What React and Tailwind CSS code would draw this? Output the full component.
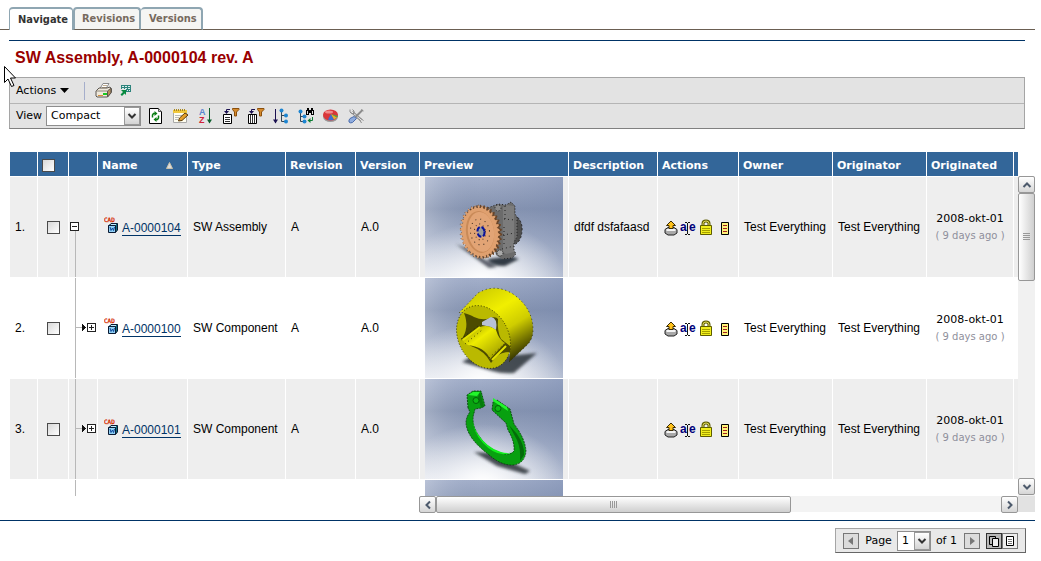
import React from "react";

const VERDANA = "font-['DejaVu_Sans',sans-serif]";

const rows = [
  { id: 1, name: "A-0000104", type: "SW Assembly", rev: "A", ver: "A.0", desc: "dfdf dsfafaasd", root: true, art: "gear" },
  { id: 2, name: "A-0000100", type: "SW Component", rev: "A", ver: "A.0", desc: "", art: "bushing" },
  { id: 3, name: "A-0000101", type: "SW Component", rev: "A", ver: "A.0", desc: "", art: "ring" },
];

/* ---------- small icons ---------- */

function Icon({ children, w = 16, h = 16, className = "" }) {
  return (
    <svg width={w} height={h} viewBox={`0 0 ${w} ${h}`} className={`block shrink-0 ${className}`} aria-hidden="true">
      {children}
    </svg>
  );
}

const Printer = () => (
  <Icon w={17} h={15}>
    <path d="M5 5.500 8 .5h6l-3 5z" fill="#fff" stroke="#8a8a8a" />
    <path d="M8 2.500h4M7 4.500h4" stroke="#c2ad90" />
    <path d="M1 8 4 5h8l3-1 1.500 2v3l-4 5H2l-1-1z" fill="#efe9dc" stroke="#5c5750" />
    <path d="m12.500 8 3.500-3v5l-3.500 4z" fill="#b48d5e" stroke="#5c5750" />
    <path d="M1 8h11.500" stroke="#8d867a" />
    <path d="M3 12.500h5" stroke="#d8903a" />
    <path d="M8 10h4v2H8z" fill="#18c81e" />
  </Icon>
);

const Export = () => (
  <Icon w={11} h={11}>
    <path d="M1 0h10v7H6V4H1z" fill="#2d837c" />
    <path d="M2 1h2v1H2zM5 1h2v1H5zM8 1h2v1H8zM2 3h2v1H2zM5 3h2v1H5zM8 3h2v1H8zM7 5h1v1H7zM9 5h1v1H9z" fill="#d9efec" />
    <path d="M1 5h5v5L4.500 8.500 2 11 .5 9.500 3 7z" fill="#078a40" />
  </Icon>
);

const Refresh = () => (
  <Icon>
    <path d="M1.500.5h9l3 3v12h-12z" fill="#fff" stroke="#000" />
    <path d="M10.500.5v3h3" fill="#ccc" stroke="#555" />
    <path d="M4.500 9.500V7l1-1.500H7M10.500 7.500V10l-1 1.500H8" fill="none" stroke="#0a7d12" strokeWidth="1.500" />
    <path d="M6.500 3v5L9.500 5.500zM8.500 9v5l-3-2.500z" fill="#0a7d12" />
  </Icon>
);

const Note = () => (
  <Icon>
    <path d="M.5 2.500h13v12H.5z" fill="#fffef0" stroke="#a8a8a8" />
    <path d="M0 2h14v3H0z" fill="#f0c83c" />
    <path d="M1.500 1v2M3.500 1v2M5.500 1v2M7.500 1v2M9.500 1v2M11.500 1v2" stroke="#a8861c" />
    <path d="M2 7.500h7M2 9.500h4M2 11.500h3" stroke="#bbb" />
    <path d="m5.500 13 1-3L12 5l3 2-6 5.500z" fill="#e5a02a" stroke="#5b3c0a" />
  </Icon>
);

const SortAZ = () => (
  <Icon>
    <text x="1" y="7" fontSize="9" fontWeight="bold" fill="#5a86d0" fontFamily="Liberation Sans, sans-serif">A</text>
    <text x="1" y="15" fontSize="9" fontWeight="bold" fill="#d11f3a" fontFamily="Liberation Sans, sans-serif">Z</text>
    <path d="M11.500 0v15" stroke="#0b5f2c" />
    <path d="M9 11.500h5l-2.500 4z" fill="#0b5f2c" />
  </Icon>
);

function Funnel({ cols }) {
  return (
    <Icon w={17}>
      <path d="M.5 6.500h8v9h-8z" fill="#fff" stroke="#000" />
      {cols ? <path d="M2.500 7v8M4.500 7v8M6.500 7v8" stroke="#333" /> : <path d="M2 9.500h5M2 11.500h5M2 13.500h5" stroke="#333" />}
      <path d="M3.500 4V1.500H7" fill="none" stroke="#1a1050" />
      <path d="M1 3h5L3.500 6z" fill="#1a1050" />
      <path d="M9.500.5h6.500v1L13.500 4v4h-2V4l-2-2.500z" fill="#d58a2c" stroke="#8a4f0c" />
    </Icon>
  );
}

const TreeSort = () => (
  <Icon>
    <path d="M2.500 1v14" stroke="#1a1050" />
    <path d="M0 11.500h5l-2.500 4z" fill="#1a1050" />
    <path d="M8.500 2v11.500M8.500 7.500h4M8.500 13.500h4" stroke="#345" fill="none" />
    <circle cx="8.500" cy="2.500" r="2" fill="#1c84d0" />
    <circle cx="13" cy="7.500" r="2" fill="#1c84d0" />
    <circle cx="13" cy="13.500" r="2" fill="#1c84d0" />
  </Icon>
);

const TreeFind = () => (
  <Icon>
    <path d="M2.500 4v9.500M2.500 8.500h4M2.500 13.500h4" stroke="#345" fill="none" />
    <circle cx="2.500" cy="3.500" r="2" fill="#1c84d0" />
    <circle cx="6.500" cy="8.500" r="2" fill="#1c84d0" />
    <circle cx="6.500" cy="13.500" r="2" fill="#1c84d0" />
    <path d="M8 2h1V0h2v2h2V0h2v2h1v5h-3V5h-2v2H8z" fill="#000" />
    <path d="M9.500 3v3M14.500 3v3" stroke="#ddd" />
    <path d="M14.500 9v3.500H12" stroke="#0b7d32" fill="none" />
    <path d="M12.500 10v5l-3-2.500z" fill="#0b7d32" />
  </Icon>
);

const Pie = () => (
  <Icon>
    <ellipse cx="7.500" cy="8.500" rx="7.500" ry="5.500" fill="#9a9a9a" />
    <ellipse cx="7.500" cy="7" rx="7.500" ry="5.500" fill="#d9363a" />
    <ellipse cx="6" cy="4" rx="4" ry="1.500" fill="#f08a8a" />
    <path d="M8 6 5 11.500q3 1.500 6 0z" fill="#3c6fd0" />
    <path d="m8 6 3 5.500 3-2z" fill="#e4b62c" />
    <path d="m8 6 6 3.500 1-1.500z" fill="#49b04b" />
  </Icon>
);

const Tools = () => (
  <Icon w={17}>
    <path d="m4 4 9 8" stroke="#8c8c8c" strokeWidth="3" />
    <path d="m4 4 9 8" stroke="#f0f0f0" />
    <path d="M2 1.500v2.500l1.500 1.500H6V3L4.500 1.500" fill="none" stroke="#8c8c8c" />
    <path d="m12 10 3.500 2.500M11.500 11.500l2 3.500" stroke="#8c8c8c" />
    <path d="m14.500 2-7 7" stroke="#8c8c8c" strokeWidth="2" />
    <path d="m13.500 1.500 2 1.500" stroke="#8c8c8c" />
    <path d="m6 8.500 2.500 2-4 4q-2 1-3.500-.5-.5-2 1-3.500z" fill="#8facde" stroke="#4a6cac" />
  </Icon>
);

const CadCube = () => (
  <Icon w={18} h={18} className="mb-[3px]">
    <text x="0" y="5" fontSize="6" fill="#d42a00" stroke="#d42a00" strokeWidth=".3" fontFamily="DejaVu Sans Mono, monospace">CAD</text>
    <path d="M4.500 9 7 6.500h6.500v6.500l-2 2.500z" fill="#0d6f80" stroke="#0a1a33" />
    <path d="M4.500 8.500h7v7h-7z" fill="#8fd0f5" stroke="#0a1a33" />
    <path d="m6 10 1 3.500 1.500-2.500 1 2.500 1-3.500" fill="none" stroke="#124a9c" />
    <path d="m7 7.500h5" stroke="#bfeaff" />
  </Icon>
);

const CheckOut = () => (
  <Icon w={14}>
    <path d="M1 9.500 4 7.500h6l3 2v3.500l-3 2H4l-3-2z" fill="#a8a8a8" stroke="#222" />
    <path d="M2.500 10h9" stroke="#f4f4f4" strokeWidth="2" />
    <path d="M7 1 2.500 5.500H5v3h4v-3h2.500z" fill="#ffc21a" stroke="#3b2a00" />
  </Icon>
);

const Rename = () => (
  <Icon w={16}>
    <text x="0" y="11" fontSize="12" fontWeight="bold" fill="#00007a" fontFamily="Liberation Sans, sans-serif">a</text>
    <text x="9" y="11" fontSize="12" fontWeight="bold" fill="#00007a" fontFamily="Liberation Sans, sans-serif">e</text>
    <path d="M7.500 3v11M5 2.500h2M8 2.500h2M5 14.500h2M8 14.500h2" stroke="#111" />
  </Icon>
);

const Lock = () => (
  <Icon w={12}>
    <path d="M3 8V4.500Q3 2 6 2t3 2.500V8" fill="none" stroke="#5d5c00" strokeWidth="3" />
    <path d="M3 8V4.500Q3 2 6 2t3 2.500V8" fill="none" stroke="#e6e060" />
    <path d="M.5 6.500h11v9H.5z" fill="#f1ee1c" stroke="#5d5c00" />
    <path d="M2 9.500h8M2 11.500h8M2 13.500h8" stroke="#a5a000" />
  </Icon>
);

const Doc = () => (
  <Icon w={9} h={14}>
    <path d="M.5.5h7v12h-7z" fill="#fff27a" stroke="#000" />
    <path d="M2 3.500h4M2 6.500h4M2 9.500h4" stroke="#a02020" />
  </Icon>
);

/* ---------- tree column ---------- */

function TreeCell({ root }) {
  return (
    <svg width="28" height="100" viewBox="0 0 28 100" className="block" shapeRendering="crispEdges" aria-hidden="true">
      {root ? (
        <>
          <path d="M6.500 54v46" stroke="#b8b8b8" />
          <path d="M1.500 45.500h8v8h-8z" fill="#fff" stroke="#222" />
          <path d="M3 49.500h5" stroke="#222" />
        </>
      ) : (
        <>
          <path d="M6.500 0v100M7 49.500h6" stroke="#b8b8b8" fill="none" />
          <path d="M13 46v7l4-3.500z" fill="#111" />
          <path d="M18.500 45.500h8v8h-8z" fill="#fff" stroke="#222" />
          <path d="M20 49.500h5M22.500 47v5" stroke="#222" />
        </>
      )}
    </svg>
  );
}

/* ---------- preview renderings ---------- */

function Backdrop({ id }) {
  return (
    <>
      <defs>
        <linearGradient id={`${id}-sky`} x1="0" y1="0" x2="0" y2="1">
          <stop offset="0" stopColor="#a3afca" />
          <stop offset=".32" stopColor="#8593b0" />
          <stop offset=".6" stopColor="#a3aec6" />
          <stop offset="1" stopColor="#dde1ea" />
        </linearGradient>
        <radialGradient id={`${id}-floor`} cx=".42" cy="1.05" r=".6">
          <stop offset="0" stopColor="#fff" />
          <stop offset="1" stopColor="#fff" stopOpacity="0" />
        </radialGradient>
        <linearGradient id={`${id}-right`} x1="0" y1="0" x2="1" y2="0">
          <stop offset="0" stopColor="#fff" stopOpacity=".25" />
          <stop offset=".4" stopColor="#8291b2" stopOpacity="0" />
          <stop offset="1" stopColor="#7385ac" stopOpacity=".4" />
        </linearGradient>
        <filter id={`${id}-soft`}>
          <feGaussianBlur stdDeviation="1.500" />
        </filter>
      </defs>
      <rect width="138" height="100" fill={`url(#${id}-sky)`} />
      <rect width="138" height="100" fill={`url(#${id}-right)`} />
      <rect width="138" height="100" fill={`url(#${id}-floor)`} />
    </>
  );
}

const TEETH = 34;
const gearPath = Array.from({ length: TEETH * 4 }, (_, i) => {
  const k = i % 4;
  const r = k < 2 ? 1 : 0.9;
  const a = (i / (TEETH * 4)) * Math.PI * 2;
  const x = Math.cos(a) * 20 * r;
  const y = Math.sin(a) * 27 * r;
  return `${i ? "L" : "M"}${x.toFixed(1)} ${y.toFixed(1)}`;
}).join("") + "z";

function GearArt() {
  return (
    <>
      <g filter="url(#gear-soft)" fill="#333a44">
        <path d="m31 67 10 4 31 19-8 1z" opacity=".8" />
        <path d="m62 82 24-3 8 3-14 7q-12 1-18-7z" />
      </g>
      <path d="M86 36q12 5 11 18-1 12-9 14z" fill="#4f4f4f" stroke="#222" strokeDasharray="2 2" />
      <path d="M60 32 73 27l8 1 5-3 4 4v8l2 3v20l-3 5v8l2 4-4 4-10 1-6-4z" fill="#6b6b6b" />
      <path d="m78 30 4-2 7 1v46l-8 2-3-2z" fill="#7c7c7c" />
      <path d="m79 42 11 1M78 58l12-2M77 72l12-3M80 29v16M79 50v20" stroke="#222" strokeDasharray="1 3" fill="none" />
      <path d="M60 32 73 27l8 1 5-3 4 4v8l2 3v20l-3 5v8l2 4-4 4-10 1" fill="none" stroke="#222" strokeDasharray="1 2" />
      <circle cx="73" cy="31" r="3" fill="#8b8b8b" stroke="#222" strokeDasharray="1 2" />
      <circle cx="75" cy="76" r="3" fill="#aaa" stroke="#222" strokeDasharray="1 1" />
      <g transform="translate(55 55) rotate(-8)">
        <path d={gearPath} transform="translate(2 0)" fill="#6a4528" />
        <path d={gearPath} fill="#dfa06f" stroke="#3f2a18" strokeWidth=".5" strokeDasharray="1 2" />
        <ellipse rx="14" ry="21" fill="#c98a58" />
        <ellipse cx="1" rx="13" ry="20" fill="#e2a475" />
        <ellipse rx="9.500" ry="13" fill="none" stroke="#3a2a20" strokeDasharray="1 4" />
        <ellipse rx="5.500" ry="8" fill="none" stroke="#3a2a20" strokeDasharray="1 3" />
        <ellipse cx="1" rx="3.500" ry="5" fill="#9a9a9a" stroke="#0a129a" strokeWidth="2" strokeDasharray="5 2" />
      </g>
    </>
  );
}

function BushingArt() {
  return (
    <>
      <defs>
        <linearGradient id="bush-side" x1=".2" y1="0" x2=".8" y2="1">
          <stop offset="0" stopColor="#c9c800" />
          <stop offset=".35" stopColor="#f1ef00" />
          <stop offset=".6" stopColor="#cfcd00" />
          <stop offset="1" stopColor="#1d1d00" />
        </linearGradient>
        <linearGradient id="bush-in" x1="0" y1="0" x2="1" y2="1">
          <stop offset="0" stopColor="#8a8900" />
          <stop offset=".4" stopColor="#eeec00" />
          <stop offset="1" stopColor="#8e8c00" />
        </linearGradient>
      </defs>
      <path d="m37 84 15-9 40 2 20-2-23 20q-12 1-22-2z" fill="#2c3038" opacity=".85" filter="url(#bushing-soft)" />
      <path d="M34 35 53 15Q70 5 88 16q20 14 20 36 0 10-7 16L84 84q4-22-12-38-18-18-38-11z" fill="url(#bush-side)" />
      <path d="M34 35 53 15Q70 5 88 16q20 14 20 36 0 10-7 16L84 84" fill="none" stroke="#222200" strokeWidth=".8" strokeDasharray="1 3" />
      <ellipse cx="58.500" cy="59" rx="25" ry="33" transform="rotate(-28 58.500 59)" fill="#bab900" stroke="#222200" strokeWidth=".8" strokeDasharray="1 2" />
      <path d="M39 35q7 2 10 4 9 4 16 1 6-2 8 1-1 12 3 20l9 7v6q-9 0-14 5l-5 6q-6-12-20-17-6-4-10-6 9-12 3-27z" fill="#4d4c00" />
      <path d="m57 44 9-5q7 1 5 13l-5-3-9-2z" fill="#b8c1d5" />
      <path d="m36 62 19-13q8-3 16 3 3 10 9 13L65 81q-5-12-22-14z" fill="url(#bush-in)" />
      <path d="m38 62 17-13M67 82l14-14" stroke="#e4e200" strokeWidth="2" />
      <path d="m40 66 17-14M64 80l15-14M36 61l17-13" stroke="#222200" strokeWidth=".8" strokeDasharray="1 3" />
    </>
  );
}

function RingArt() {
  return (
    <>
      <path d="m49 73 18 1 38 18-5 3-28-8z" fill="#2c3038" opacity=".85" filter="url(#ring-soft)" />
      <path
        fillRule="evenodd"
        d="M43 29 42 16l6-4 8 0 4 15-4 2-6 1-1 4q-3 9 3 20 10 16 24 20 9 3 13-2 1-9-6-21l-2-7-14-13 1-8 4-2 13 9 4 15q11 14 12 27-1 12-12 14-13 1-26-11Q42 59 41 44q0-6 4-11z"
        fill="#08a010"
        stroke="#043c06"
        strokeWidth=".8"
        strokeDasharray="2 1"
      />
      <path d="M48 36q-1 9 4 18 10 15 24 19 7 2 11 0-14 7-29-9-12-13-10-28z" fill="#12f01c" />
      <path d="m68 19 14 9 1 4-15-10zM43 16l5-3 7 0-3 4z" fill="#22f52c" />
      <path d="m84 46 8 9q8 12 7 21l-4 6q1-12-3-21z" fill="#046a0a" />
      <path d="m55 13 4 14-3 2-3-11z" fill="#067a0c" />
      <circle cx="51" cy="21.500" r="3" fill="#0cb814" stroke="#04600a" />
      <circle cx="73" cy="29.500" r="3" fill="#0cb814" stroke="#04600a" />
    </>
  );
}

function Preview({ art }) {
  return (
    <svg width="138" height="100" viewBox="0 0 138 100" className="block" role="img" aria-label={art}>
      <Backdrop id={art} />
      {art === "gear" && <GearArt />}
      {art === "bushing" && <BushingArt />}
      {art === "ring" && <RingArt />}
    </svg>
  );
}

/* ---------- controls ---------- */

function Chevron({ dir = "down", color = "#4d5a6c" }) {
  const d = {
    down: "m1.500 3 3.500 3.500L8.500 3",
    up: "M1.500 7 5 3.500 8.500 7",
    left: "M7 1.500 3.500 5 7 8.500",
    right: "M3 1.500 6.500 5 3 8.500",
  }[dir];
  return (
    <Icon w={10} h={10}>
      <path d={d} fill="none" stroke={color} strokeWidth="2" />
    </Icon>
  );
}

function ScrollButton({ dir }) {
  return (
    <button
      aria-label={`Scroll ${dir}`}
      className="flex h-[17px] w-[17px] shrink-0 items-center justify-center rounded-[2px] border border-[#979797] bg-linear-to-b from-white to-[#d6d6d6]"
    >
      <Chevron dir={dir} />
    </button>
  );
}

function Check({ label }) {
  return (
    <input
      type="checkbox"
      aria-label={label}
      className="block h-[13px] w-[13px] appearance-none border border-[#4a4a4a] bg-linear-to-br from-[#d8d8d8] to-white"
    />
  );
}

function Select({ label, value, className }) {
  return (
    <span className="relative inline-flex">
      <select
        aria-label={label}
        defaultValue={value}
        className={`appearance-none border border-[#8e8e8e] bg-white pl-1 text-[11px] text-black ${className}`}
      >
        <option>{value}</option>
      </select>
      <span className="pointer-events-none absolute top-px right-px bottom-px flex w-4 items-center justify-center border border-[#999] bg-linear-to-b from-white to-[#d4d4d4]">
        <Chevron color="#333" />
      </span>
    </span>
  );
}

function Th({ children, edge = "border-r px-1" }) {
  return <th className={`border-b border-white bg-[#336699] pt-[3px] text-left font-bold whitespace-nowrap ${edge}`}>{children}</th>;
}

function Td({ children, pad = "pl-[5px]", edge = "border-r" }) {
  return <td className={`h-[101px] border-b border-white py-0 pr-0 whitespace-nowrap ${pad} ${edge}`}>{children}</td>;
}

const toolbar = [
  ["Refresh", <Refresh />],
  ["Edit", <Note />],
  ["Sort", <SortAZ />],
  ["Filter rows", <Funnel />],
  ["Filter columns", <Funnel cols />],
  ["Sort structure", <TreeSort />],
  ["Find in structure", <TreeFind />],
  ["Chart", <Pie />],
  ["Tools", <Tools />],
];

const tabText = "font-['DejaVu_Sans_Condensed','DejaVu_Sans',sans-serif] text-[11px] font-bold";

export default function App() {
  return (
    <div className="relative min-h-screen bg-white pr-[6px] font-['Liberation_Sans',Arial,sans-serif] text-[12px] leading-4 text-black">
      <nav className="flex h-[30px] items-end">
        <span className="w-[9px] self-end border-b border-[#6b5f52]" />
        <a href="#navigate" className={`${tabText} flex h-[23px] w-16 items-center rounded-t-[4px] border-x border-t-2 border-[#8fa6b2] bg-white pl-2 text-[#333]`}>
          Navigate
        </a>
        <a href="#revisions" className={`${tabText} flex h-[23px] w-[68px] items-center rounded-t-[4px] border-x-2 border-t-2 border-b border-[#8fa6b2] border-b-[#6b5f52] bg-[#f5f5f3] pl-[7px] text-[#776a5e]`}>
          Revisions
        </a>
        <a href="#versions" className={`${tabText} flex h-[23px] w-[62px] items-center rounded-t-[4px] border-t-2 border-r-2 border-b border-[#8fa6b2] border-b-[#6b5f52] bg-[#f5f5f3] pl-2 text-[#776a5e]`}>
          Versions
        </a>
        <span className="flex-1 border-b border-[#6b5f52]" />
      </nav>

      <header className="mt-[10px] mr-[10px] ml-[9px] border-t border-[#003366] pt-[6px] pb-[9px] pl-[6px]">
        <h1 className="text-[16px] leading-[21px] font-bold text-[#990000]">SW Assembly, A-0000104 rev. A</h1>
      </header>

      <section className={`${VERDANA} mr-[10px] ml-[9px] border border-[#a5a5a5] border-b-[#808080] bg-[#e3e3e3] text-[11px]`}>
        <div className="flex h-[26px] items-center border-b border-[#b5b5b5] pl-[6px]">
          <button className="flex items-center gap-1">
            Actions
            <Icon w={9} h={5}>
              <path d="M0 0h9L4.500 5z" fill="#000" />
            </Icon>
          </button>
          <span className="mr-[10px] ml-[15px] h-[18px] w-px bg-[#a5aecb]" />
          <button aria-label="Print"><Printer /></button>
          <button aria-label="Export" className="ml-2"><Export /></button>
        </div>
        <div className="flex h-6 items-center pl-[6px]">
          <span className="mr-1">View</span>
          <Select label="View" value="Compact" className="h-5 w-[95px]" />
          <div className="ml-[7px] flex gap-[9px]">
            {toolbar.map(([label, icon]) => (
              <button key={label} aria-label={label} className="w-4">{icon}</button>
            ))}
          </div>
        </div>
      </section>

      <main className="mt-[23px] ml-[10px]">
        <div className="flex">
          <div className="h-[344px] min-w-0 flex-1 overflow-hidden">
            <table className="w-full min-w-[1008px] table-fixed border-separate border-spacing-0">
              <colgroup>
                <col className="w-[28px]" />
                <col className="w-[31px]" />
                <col className="w-[29px]" />
                <col className="w-[90px]" />
                <col className="w-[98px]" />
                <col className="w-[70px]" />
                <col className="w-[64px]" />
                <col className="w-[149px]" />
                <col className="w-[89px]" />
                <col className="w-[81px]" />
                <col className="w-[94px]" />
                <col className="w-[94px]" />
                <col className="w-[87px]" />
                <col />
              </colgroup>
              <thead className={`${VERDANA} text-[11px] text-white`}>
                <tr className="h-[25px]">
                  <Th />
                  <Th><Check label="Select all" /></Th>
                  <Th />
                  <Th>
                    <span className="flex items-center justify-between pr-[10px]">
                      Name
                      <Icon w={7} h={7}>
                        <path d="M.5 6.500 3.500.5l3 6z" fill="#ddd" stroke="#c9c0a8" />
                      </Icon>
                    </span>
                  </Th>
                  <Th>Type</Th>
                  <Th>Revision</Th>
                  <Th>Version</Th>
                  <Th>Preview</Th>
                  <Th>Description</Th>
                  <Th>Actions</Th>
                  <Th>Owner</Th>
                  <Th>Originator</Th>
                  <Th>Originated</Th>
                  <Th edge="px-0" />
                </tr>
              </thead>
              <tbody>
                {rows.map((r) => (
                  <tr key={r.id} className={r.id % 2 ? "bg-[#eeeeee]" : "bg-white"}>
                    <Td>{r.id}.</Td>
                    <Td pad="pl-[9px]"><Check label={`Select ${r.name}`} /></Td>
                    <Td pad="pl-0"><TreeCell root={r.root} /></Td>
                    <Td>
                      <span className="flex items-center pl-px">
                        <CadCube />
                        <a href={`#${r.name}`} className="mt-1 border-b border-[#003366] leading-[13px] text-[#003366]">{r.name}</a>
                      </span>
                    </Td>
                    <Td>{r.type}</Td>
                    <Td>{r.rev}</Td>
                    <Td>{r.ver}</Td>
                    <Td><Preview art={r.art} /></Td>
                    <Td>{r.desc}</Td>
                    <Td>
                      <span className="flex items-end pl-px">
                        <button aria-label="Check out" className="mr-[2px]"><CheckOut /></button>
                        <button aria-label="Rename" className="mr-1"><Rename /></button>
                        <button aria-label="Lock" className="mr-[9px] mb-px"><Lock /></button>
                        <button aria-label="Details"><Doc /></button>
                      </span>
                    </Td>
                    <Td>Test Everything</Td>
                    <Td>Test Everything</Td>
                    <Td pad="pl-0">
                      <div className={`${VERDANA} text-center leading-[17px]`}>
                        <div className="text-[11px]">2008-okt-01</div>
                        <div className="text-[10px] text-[#8f8f9c]">( 9 days ago )</div>
                      </div>
                    </Td>
                    <Td pad="pl-0" edge="border-r-0" />
                  </tr>
                ))}
                <tr>
                  <td /><td />
                  <td className="p-0"><TreeCell /></td>
                  <td /><td /><td /><td />
                  <td className="p-0 pl-[5px]"><Preview art="next" /></td>
                </tr>
              </tbody>
            </table>
          </div>
          <div className="mt-[24px] flex w-[17px] flex-col bg-[#f1f1f1]">
            <ScrollButton dir="up" />
            <div className="flex h-[88px] items-center justify-center rounded-[2px] border border-[#979797] bg-linear-to-r from-white to-[#cfcfcf]">
              <Icon w={7} h={8}>
                <path d="M0 .5h7M0 2.500h7M0 4.500h7M0 6.500h7" stroke="#999" />
              </Icon>
            </div>
            <div className="flex-1" />
            <div className="pb-px"><ScrollButton dir="down" /></div>
          </div>
        </div>
        <div className="flex h-4 pl-[409px]">
          <div className="flex h-4 flex-1 bg-[#f3f3f3]">
            <ScrollButton dir="left" />
            <div className="flex h-[17px] w-[355px] shrink-0 items-center justify-center rounded-[2px] border border-[#979797] bg-linear-to-b from-white to-[#cfcfcf]">
              <Icon w={8} h={7}>
                <path d="M.5 0v7M2.500 0v7M4.500 0v7M6.500 0v7" stroke="#999" />
              </Icon>
            </div>
            <div className="flex-1" />
            <ScrollButton dir="right" />
          </div>
          <div className="w-[17px] bg-[#e2e2e2]" />
        </div>
      </main>

      <footer className={`${VERDANA} mt-2 flex justify-end border-t border-[#003366] pt-[7px] pr-[9px] text-[11px]`}>
        <div className="flex h-[25px] items-center border border-[#a5a5a5] border-r-[#666] border-b-[#666] bg-[#e9e9e9] px-[7px]">
          <button aria-label="Previous page" className="flex h-4 w-4 items-center justify-center border border-[#777] bg-[#dcdcdc]">
            <Icon w={6} h={8}><path d="M5 0v8L0 4z" fill="#777" /></Icon>
          </button>
          <span className="mr-[5px] ml-[6px]">Page</span>
          <Select label="Page" value="1" className="h-5 w-[34px]" />
          <span className="mr-[7px] ml-[5px]">of 1</span>
          <button aria-label="Next page" className="mr-[6px] flex h-4 w-4 items-center justify-center border border-[#777] bg-[#dcdcdc]">
            <Icon w={6} h={8}><path d="M1 0v8l5-4z" fill="#777" /></Icon>
          </button>
          <button aria-label="Multiple pages" className="flex h-4 w-4 items-center justify-center border border-[#333] bg-[#b9b9b9]">
            <Icon w={10} h={12}>
              <path d="M.5 1.500h6v8h-6z" fill="none" stroke="#000" />
              <path d="M3.500 3.500h6v8h-6z" fill="#eee" stroke="#000" />
            </Icon>
          </button>
          <button aria-label="Single page" className="flex h-4 w-4 items-center justify-center border border-[#777] bg-[#eee]">
            <Icon w={9} h={10}>
              <path d="M.5.5h7v9h-7z" fill="#fff" stroke="#000" />
              <path d="M2 3.500h4M2 5.500h4M2 7.500h4" stroke="#777" />
            </Icon>
          </button>
        </div>
      </footer>

      <svg width="13" height="22" viewBox="0 0 13 22" className="pointer-events-none absolute top-[66px] left-[4px]" aria-hidden="true">
        <path d="M.5.5v16l3.500-3.500 3.500 7.500 2.500-1-3.500-7.500h5z" fill="#fff" stroke="#000" />
      </svg>
    </div>
  );
}
